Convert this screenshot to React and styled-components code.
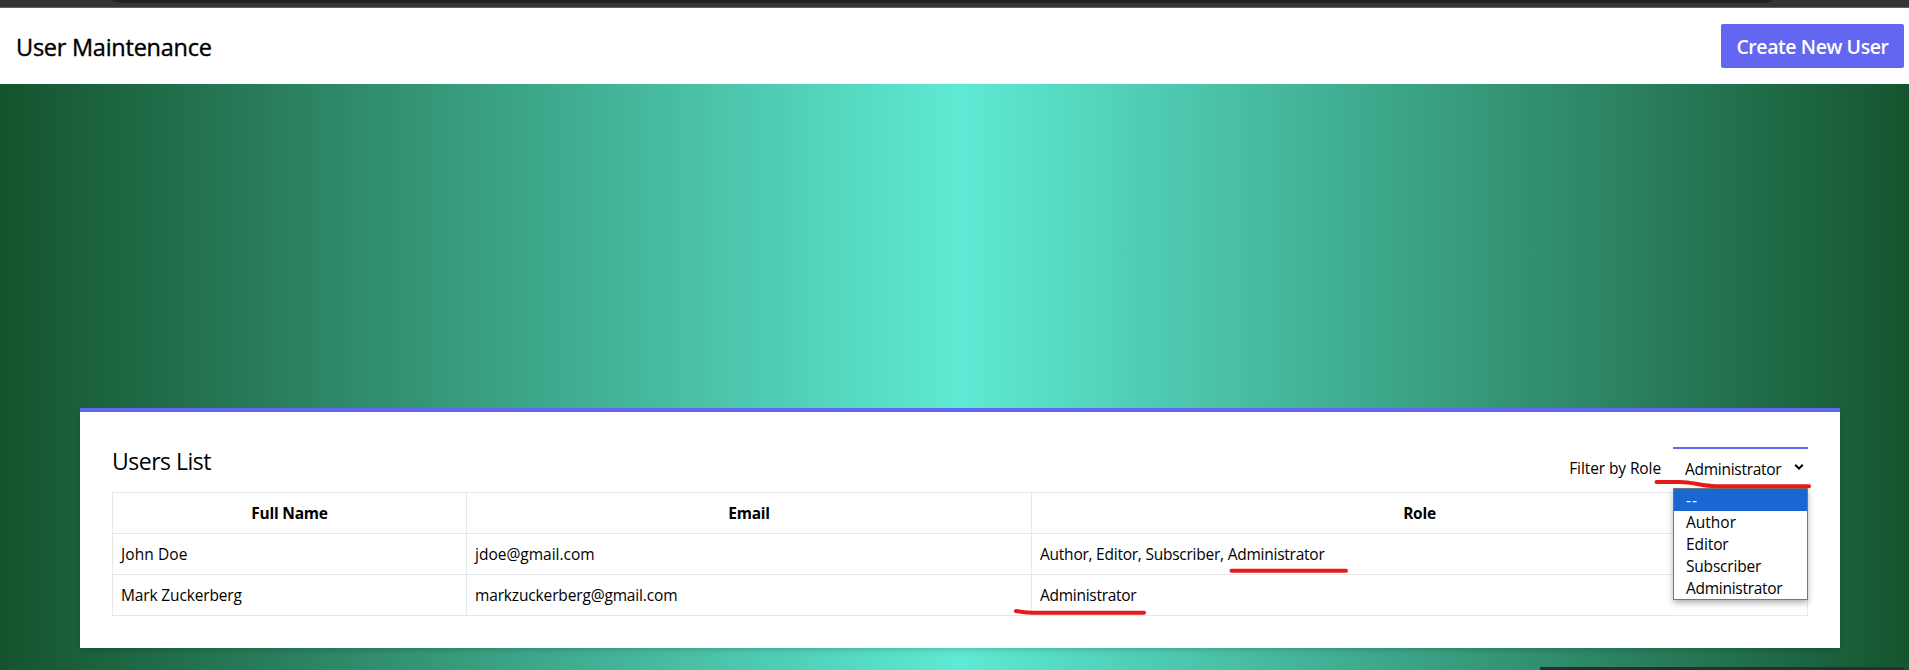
import React from "react";
import styled, { createGlobalStyle } from "styled-components";

const GlobalStyle = createGlobalStyle`
  *, *::before, *::after { box-sizing: border-box; }
  body {
    margin: 0;
    overflow: hidden;
    color: #000;
    font: 400 15.5px/24px "Open Sans", "Noto Sans", sans-serif;
  }
`;

const Viewport = styled.div`
  position: relative;
  height: 670px;
  overflow: hidden;
`;

const Page = styled.div`
  width: 1920px;
  height: 670px;
  display: flex;
  flex-direction: column;
`;

const BrowserEdge = styled.div`
  flex: none;
  height: 8px;
  padding: 0 148px 0 113px;
  background: #353535;
  border-bottom: 1px solid #626262;
`;

const AddressBar = styled.div`
  height: 3px;
  background: #202124;
  border-radius: 0 0 10px 10px / 0 0 3px 3px;
`;

const Header = styled.header`
  flex: none;
  height: 76px;
  padding: 0 16px;
  display: flex;
  align-items: center;
  justify-content: space-between;
  background: #fff;
`;

const PageTitle = styled.h1`
  margin: 0;
  padding-top: 2px;
  font-size: 23.5px;
  line-height: 32px;
  font-weight: 500;
  letter-spacing: -0.25px;
  -webkit-text-stroke: 0.4px #000;
`;

const CreateButton = styled.button`
  width: 183px;
  height: 44px;
  padding: 2px 0 0;
  border: 0;
  border-radius: 2px;
  background: #6366f1;
  color: #fff;
  font: 600 19.5px/28px "Open Sans", "Noto Sans", sans-serif;
  letter-spacing: -0.42px;
  white-space: nowrap;
`;

const Main = styled.main`
  flex: 1;
  padding: 324px 80px 0;
  background: linear-gradient(to right, #14532d, #5eead4, #14532d);
`;

const Card = styled.section`
  position: relative;
  height: 240px;
  padding: 32px;
  border-top: 4px solid #6366f1;
  background: #fff;
  box-shadow: 0 4px 6px -1px rgba(0, 0, 0, 0.1), 0 2px 4px -2px rgba(0, 0, 0, 0.1);
`;

const CardHead = styled.div`
  height: 48px;
  display: flex;
  align-items: flex-start;
  justify-content: space-between;
`;

const CardTitle = styled.h2`
  margin: 0;
  font-size: 23px;
  line-height: 34px;
  font-weight: 400;
  letter-spacing: -0.5px;
`;

const Text = styled.span`
  letter-spacing: ${(p) => p.$track}px;
`;

const Filter = styled.div`
  display: flex;
  gap: 12px;
  padding-top: 3px;
`;

const FilterLabel = styled.label`
  padding-top: 9px;
  letter-spacing: -0.1px;
`;

const Select = styled.div`
  position: relative;
  width: 135px;
  height: 41px;
  padding: 8px 4px 0 12px;
  border-top: 2px solid #6366f1;
  display: flex;
  align-items: flex-start;
  justify-content: space-between;
`;

const Chevron = styled.svg`
  width: 10px;
  height: 8px;
  margin-top: 6px;
`;

const Menu = styled.ul`
  position: absolute;
  z-index: 1;
  top: 39px;
  left: 0;
  width: 135px;
  margin: 0;
  padding: 0;
  list-style: none;
  background: #fff;
  border: 1px solid #767676;
  box-shadow: 0 3px 6px rgba(0, 0, 0, 0.3);
`;

const Option = styled.li`
  height: 22px;
  padding-left: 12px;
  line-height: 23px;
  letter-spacing: ${(p) => p.$track}px;
  color: ${(p) => (p.$active ? "#fff" : "#000")};
  background: ${(p) => (p.$active ? "#1967d2" : "transparent")};
`;

const Table = styled.table`
  width: 1696px;
  table-layout: fixed;
  border-collapse: collapse;
`;

const Cell = styled.td`
  height: 41px;
  padding: 0 8px;
  border: 1px solid #e5e7eb;
  text-align: left;
`;

const HeadCell = styled(Cell).attrs({ as: "th" })`
  width: ${(p) => p.$width};
  text-align: center;
  font-weight: 700;
  letter-spacing: -0.25px;
`;

const Marks = styled.svg`
  position: absolute;
  z-index: 2;
  inset: 0;
  width: 1909px;
  height: 670px;
  pointer-events: none;
  fill: none;
  stroke: #e61a1a;
  stroke-width: 4;
  stroke-linecap: round;
  stroke-linejoin: round;
`;

const BottomEdge = styled.div`
  position: absolute;
  right: 5px;
  bottom: 0;
  width: 364px;
  height: 3px;
  background: #27302c;
`;

const roles = [
  { label: "--", track: 0.9 },
  { label: "Author", track: 0 },
  { label: "Editor", track: -0.1 },
  { label: "Subscriber", track: -0.2 },
  { label: "Administrator", track: -0.28 },
];

const users = [
  {
    name: ["John Doe", 0.1],
    email: ["jdoe@gmail.com", 0],
    role: ["Author, Editor, Subscriber, Administrator", -0.24],
  },
  {
    name: ["Mark Zuckerberg", -0.15],
    email: ["markzuckerberg@gmail.com", -0.15],
    role: ["Administrator", -0.28],
  },
];

export default function App() {
  return (
    <Viewport>
      <GlobalStyle />
      <Page>
        <BrowserEdge><AddressBar /></BrowserEdge>
        <Header>
          <PageTitle>User Maintenance</PageTitle>
          <CreateButton>Create New User</CreateButton>
        </Header>
        <Main>
          <Card>
            <CardHead>
              <CardTitle>Users List</CardTitle>
              <Filter>
                <FilterLabel>Filter by Role</FilterLabel>
                <Select>
                  <Text $track={-0.28}>Administrator</Text>
                  <Chevron viewBox="0 0 10 8">
                    <path d="M1.2 1.8 5 5.6 8.8 1.8" fill="none" stroke="#000" strokeWidth="2" />
                  </Chevron>
                  <Menu>
                    {roles.map((r, i) => (
                      <Option key={r.label} $active={i === 0} $track={r.track}>{r.label}</Option>
                    ))}
                  </Menu>
                </Select>
              </Filter>
            </CardHead>
            <Table>
              <thead>
                <tr>
                  <HeadCell $width="354px">Full Name</HeadCell>
                  <HeadCell $width="565px">Email</HeadCell>
                  <HeadCell $width="auto">Role</HeadCell>
                </tr>
              </thead>
              <tbody>
                {users.map((u) => (
                  <tr key={u.email[0]}>
                    {[u.name, u.email, u.role].map(([text, track]) => (
                      <Cell key={text}><Text $track={track}>{text}</Text></Cell>
                    ))}
                  </tr>
                ))}
              </tbody>
            </Table>
          </Card>
        </Main>
      </Page>
      <Marks viewBox="0 0 1909 670">
        <path d="M1656.5 482H1680C1692 482 1702 486 1716 486.3H1809" />
        <path d="M1231.5 570.7H1346" />
        <path d="M1016 611Q1024 612.7 1032 612.7H1144" />
      </Marks>
      <BottomEdge />
    </Viewport>
  );
}
